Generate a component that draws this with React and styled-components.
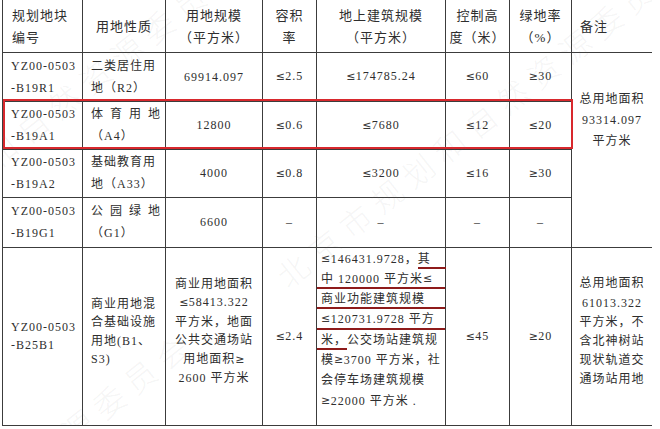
import React from 'react';
import styled, { createGlobalStyle, css } from 'styled-components';

const Global = createGlobalStyle`
  html, body { margin: 0; padding: 0; background: #fff; overflow: hidden; }
  body { font-family: "Liberation Serif", "Noto Sans CJK SC", serif; color: #2e2e2e; }
`;

const Sheet = styled.div`
  position: relative;
  width: 650px;
  margin-left: 2px;
  overflow: hidden;
`;

const Grid = styled.table`
  border-collapse: collapse;
  table-layout: fixed;
  width: 650px;
`;

const HeadRow = styled.tr`
  height: 52px;
`;

const Row = styled.tr`
  height: ${p => p.$h}px;
`;

const HeadCell = styled.th`
  border: 1px solid #3c3c3c;
  border-top: none;
  font-weight: normal;
  font-size: 13px;
  letter-spacing: 1px;
  line-height: 22px;
  padding: 3px 2px 0;
  text-align: ${p => p.$align || 'center'};
  vertical-align: middle;
`;

const Cell = styled.td`
  border: 1px solid #3c3c3c;
  font-size: 12px;
  letter-spacing: 1px;
  line-height: ${p => p.$lh || 22}px;
  padding: ${p => p.$pad || '0 8px'};
  text-align: ${p => p.$align || 'center'};
  vertical-align: ${p => p.$valign || 'middle'};
  white-space: nowrap;
`;

const Sym = styled.span`
  font-family: "DejaVu Sans", sans-serif;
  font-size: 11px;
  letter-spacing: 0.5px;
  color: #3a3a3a;
`;

const Spread = styled.span`
  letter-spacing: 7px;
`;

const Clause = styled.div`
  display: flex;
  white-space: nowrap;
  margin: 0 -1px 0 -4px;
  padding-left: 4px;
  ${p => p.$marked && css`
    box-shadow: inset 0 -2px 0 #8e1b1b;
  `}
`;

const Mark = styled.span`
  flex: ${p => (p.$grow ? 1 : 'none')};
  box-shadow: inset 0 -2px 0 #8e1b1b;
  ${p => p.$lead && css`
    margin-left: -4px;
    padding-left: 4px;
  `}
`;

const Highlight = styled.div`
  position: absolute;
  left: 1px;
  top: 99px;
  width: 566px;
  height: 46px;
  border: 2px solid #d8282d;
  pointer-events: none;
`;

const WatermarkLayer = styled.div`
  position: absolute;
  inset: 0;
  overflow: hidden;
  pointer-events: none;
`;

const Watermark = styled.div`
  position: absolute;
  font-family: "Noto Sans CJK SC", sans-serif;
  font-weight: 300;
  font-size: 31px;
  letter-spacing: 9px;
  white-space: nowrap;
  color: rgba(120, 120, 120, 0.08);
  transform-origin: 0 100%;
  transform: rotate(-38.5deg);
`;

const WATERMARKS = [
  { left: 292, top: 252 },
  { left: -156, top: 257 },
  { left: -205, top: 632 },
  { left: 410, top: 640 },
];

// wraps the ≤ / ≥ signs so they get a wider glyph, as in the scan
const rel = text =>
  text.split(/([≤≥])/).map((part, i) =>
    part === '≤' || part === '≥' ? <Sym key={i}>{part}</Sym> : part
  );

export default function App() {
  return (
    <>
      <Global />
      <Sheet>
        <Grid>
          <colgroup>
            <col style={{ width: 80 }} />
            <col style={{ width: 83 }} />
            <col style={{ width: 97 }} />
            <col style={{ width: 54 }} />
            <col style={{ width: 129 }} />
            <col style={{ width: 64 }} />
            <col style={{ width: 62 }} />
            <col style={{ width: 81 }} />
          </colgroup>
          <thead>
            <HeadRow>
              <HeadCell $align="left" style={{ paddingLeft: 9 }}>规划地块<br />编号</HeadCell>
              <HeadCell>用地性质</HeadCell>
              <HeadCell>用地规模<br />（平方米）</HeadCell>
              <HeadCell>容积<br />率</HeadCell>
              <HeadCell>地上建筑规模<br />（平方米）</HeadCell>
              <HeadCell>控制高<br />度（米）</HeadCell>
              <HeadCell>绿地率<br />（%）</HeadCell>
              <HeadCell $align="left" style={{ paddingLeft: 8 }}>备注</HeadCell>
            </HeadRow>
          </thead>
          <tbody>
            <Row $h={49}>
              <Cell $align="left">YZ00-0503<br />-B19R1</Cell>
              <Cell $align="left">二类居住用<br />地（R2）</Cell>
              <Cell>69914.097</Cell>
              <Cell>{rel('≤2.5')}</Cell>
              <Cell>{rel('≤174785.24')}</Cell>
              <Cell>{rel('≤60')}</Cell>
              <Cell>{rel('≥30')}</Cell>
              <Cell rowSpan={4} $valign="top" $lh={21} $pad="36px 4px 0">
                总用地面积<br />93314.097<br />平方米
              </Cell>
            </Row>
            <Row $h={48}>
              <Cell $align="left">YZ00-0503<br />-B19A1</Cell>
              <Cell $align="left"><Spread>体育用地</Spread><br />（A4）</Cell>
              <Cell>12800</Cell>
              <Cell>{rel('≤0.6')}</Cell>
              <Cell>{rel('≤7680')}</Cell>
              <Cell>{rel('≤12')}</Cell>
              <Cell>{rel('≤20')}</Cell>
            </Row>
            <Row $h={48}>
              <Cell $align="left">YZ00-0503<br />-B19A2</Cell>
              <Cell $align="left">基础教育用<br />地（A33）</Cell>
              <Cell>4000</Cell>
              <Cell>{rel('≤0.8')}</Cell>
              <Cell>{rel('≤3200')}</Cell>
              <Cell>{rel('≤16')}</Cell>
              <Cell>{rel('≥30')}</Cell>
            </Row>
            <Row $h={50}>
              <Cell $align="left">YZ00-0503<br />-B19G1</Cell>
              <Cell $align="left"><Spread>公园绿地</Spread><br />（G1）</Cell>
              <Cell>6600</Cell>
              <Cell>–</Cell>
              <Cell>–</Cell>
              <Cell>–</Cell>
              <Cell>–</Cell>
            </Row>
            <Row $h={178}>
              <Cell $align="left" $lh={18}>YZ00-0503<br />-B25B1</Cell>
              <Cell $align="left" $lh={18.5} $pad="0 8px 9px">
                商业用地混<br />合基础设施<br />用地(B1、<br />S3)
              </Cell>
              <Cell $lh={18.5} $pad="0 4px 10px">
                商业用地面积<br />{rel('≤58413.322')}<br />平方米，地面<br />公共交通场站<br />{rel('用地面积≥')}<br />2600 平方米
              </Cell>
              <Cell>{rel('≤2.4')}</Cell>
              <Cell $align="left" $valign="top" $lh={20.3} $pad="1px 0 0 4px">
                <Clause>{rel('≤146431.9728，')}<Mark $grow>其</Mark></Clause>
                <Clause $marked>{rel('中 120000 平方米≤')}</Clause>
                <Clause $marked>商业功能建筑规模</Clause>
                <Clause $marked>{rel('≤120731.9728 平方')}</Clause>
                <Clause><Mark $lead>米，</Mark>公交场站建筑规</Clause>
                <Clause>{rel('模≥3700 平方米，社')}</Clause>
                <Clause>会停车场建筑规模</Clause>
                <Clause>{rel('≥22000 平方米 .')}</Clause>
              </Cell>
              <Cell>{rel('≤45')}</Cell>
              <Cell>{rel('≥20')}</Cell>
              <Cell $lh={19.2} $pad="0 4px 8px">
                总用地面积<br />61013.322<br />平方米，不<br />含北神树站<br />现状轨道交<br />通场站用地
              </Cell>
            </Row>
          </tbody>
        </Grid>
        <Highlight />
        <WatermarkLayer>
          {WATERMARKS.map((w, i) => (
            <Watermark key={i} style={{ left: w.left, top: w.top }}>
              北京市规划和自然资源委员会
            </Watermark>
          ))}
        </WatermarkLayer>
      </Sheet>
    </>
  );
}
